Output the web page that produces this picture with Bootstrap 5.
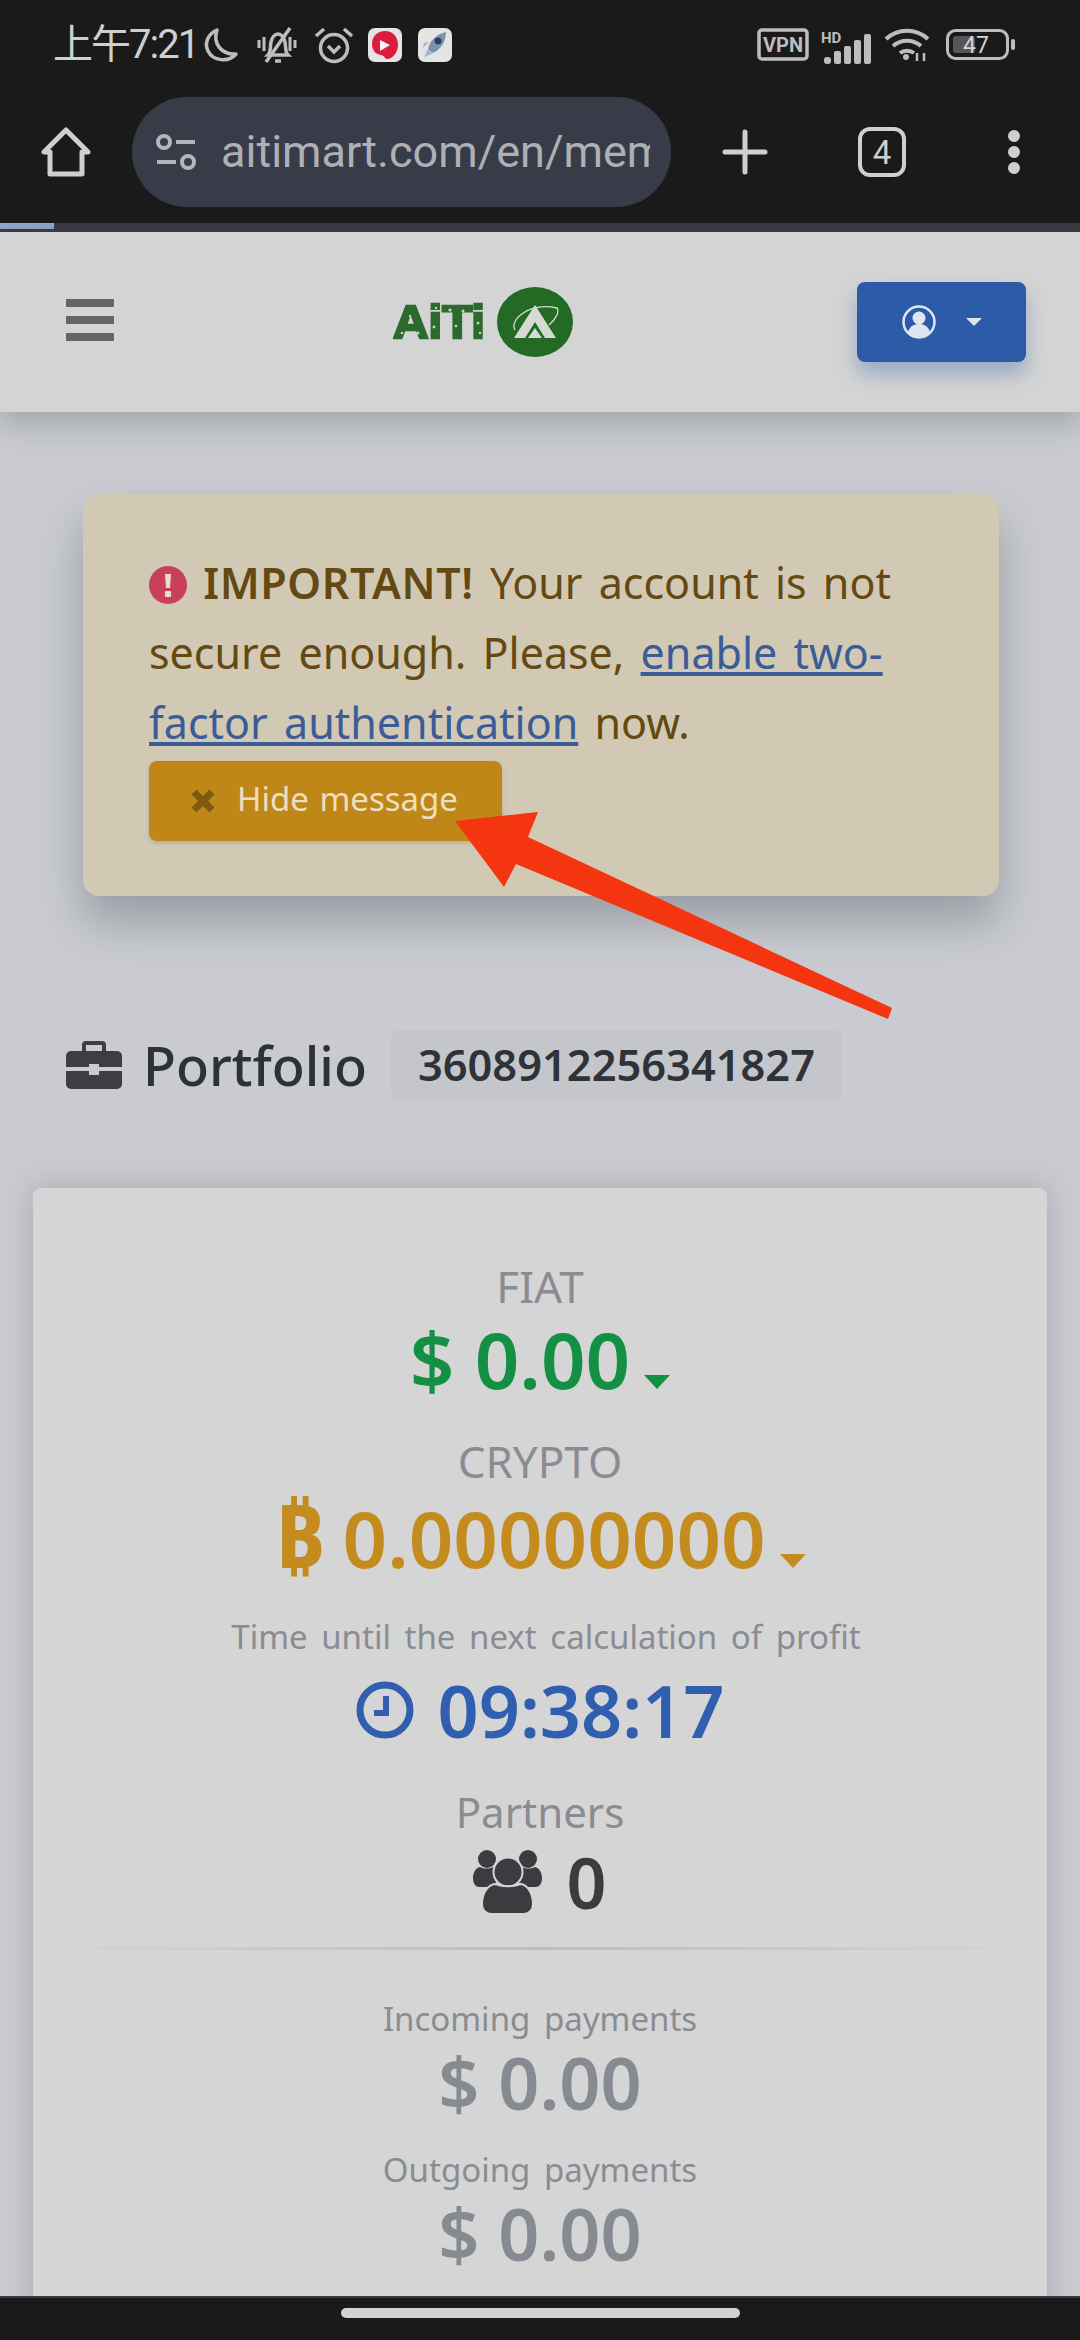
<!DOCTYPE html>
<html lang="en">
<head>
    <meta charset="UTF-8">
    <title>AiTi - Portfolio</title>
    <meta name="viewport" content="width=device-width, initial-scale=1">
    <link href="https://cdn.jsdelivr.net/npm/bootstrap@5.3.3/dist/css/bootstrap.min.css" rel="stylesheet">
    <style>
        html, body { height: 2340px; overflow: hidden; }
        body { background: #c9cbd1; font-family: "Noto Sans", sans-serif; color: #33363a; }
        .phone { height: 2340px; position: relative; }

        /* browser chrome */
        .chrome-top { background: #1a1a1a; color: #cfcfcf; }
        .status-row { height: 97px; padding: 0 65px 8px 53px; }
        .clock-txt { font-family: "Roboto", "Noto Sans CJK SC", sans-serif; font-size: 40px; line-height: 1; letter-spacing: -2px; width: 150px; white-space: nowrap; }
        .app-chip { width: 34px; height: 34px; border-radius: 7px; background: #e4e4e4; }
        .tool-row { height: 126px; padding: 0 0 16px 41px; }
        .url-pill { width: 539px; height: 110px; margin-left: 41px; border-radius: 55px; background: #383c48; padding-left: 23px; overflow: hidden; }
        .url-txt { font-family: "Roboto", sans-serif; font-size: 45px; color: #aeb0b6; margin-left: 24px; white-space: nowrap; width: 429px; overflow: hidden; }
        .plus-ico { margin-left: 51px; }
        .tab-count { margin-left: 90px; width: 48px; height: 50px; border: 4px solid #cfcfcf; border-radius: 12px; font-family: "Roboto", sans-serif; font-size: 33px; line-height: 1; }
        .dots-ico { margin-left: 101px; }
        .load-track { height: 9px; background: #3a3a42; }
        .load-fill { width: 54px; height: 6px; background: #8fa6cf; }

        /* site header */
        .site-nav { height: 180px; background: #d4d4d4; padding: 0 54px 0 66px; box-shadow: 0 10px 30px rgba(60, 62, 70, .3); position: relative; }
        .burger-bar { width: 48px; height: 8px; background: #666; border-radius: 1px; }
        .burger-stack { gap: 9px; margin-bottom: 4px; }
        .site-logo { margin-left: 279px; }
        .logo-word { font-family: "Liberation Sans", sans-serif; font-weight: 700; font-size: 47px; fill: #2d6a2d; stroke: #2d6a2d; stroke-width: 2.5px; }
        .user-btn { width: 169px; height: 80px; background: #2c5ba8; border: 0; border-radius: 8px; box-shadow: 0 12px 20px rgba(44, 91, 168, .35); color: #dfe6f2; gap: 30px; font-size: 28px; }
        .user-btn.dropdown-toggle::after { margin-left: 0; vertical-align: 0; }

        /* notice */
        .notice { margin: 82px 81px 0 83px; padding: 54px 66px 55px; background: #d2c9b5; border: 0; border-radius: 16px; color: #644a12; font-size: 43px; word-spacing: 5px; line-height: 70px; box-shadow: 0 26px 44px rgba(60, 62, 70, .32); }
        .notice strong { letter-spacing: .6px; }
        .notice a { color: #3b5c95; }
        .notice-ico { width: 38px; height: 38px; vertical-align: -5px; }
        .notice-btn { display: flex; align-items: center; width: 353px; height: 80px; margin-top: 3px; padding: 0 0 4px 42px; background: #bf8718; border: 0; border-radius: 8px; color: #ecdfc0; font-size: 33px; word-spacing: 2px; box-shadow: 0 2px 4px rgba(70, 60, 30, .2); }
        .notice-x { margin: 4px 22px 0 0; }

        /* portfolio title */
        .pf-head { margin: 134px 0 0 66px; height: 70px; }
        .pf-title { font-size: 54px; font-weight: 500; color: #2e3136; margin: 0 24px 0 21px; line-height: 70px; }
        .pf-id { background: #c5c6cc; color: #2f3237; font-size: 43.4px; font-weight: 600; line-height: 70px; height: 70px; padding: 0 27px; border-radius: 5px; }

        /* summary card */
        .sum-card { margin: 88px 33px 0; height: 1200px; background: #d5d5d5; border: 0; border-radius: 8px; box-shadow: 0 0 30px rgba(70, 72, 80, .25); padding-top: 68px; text-align: center; }
        .lbl { color: #8a8c92; font-size: 44px; line-height: 60px; }
        .lbl-partners { font-size: 42px; margin-top: 30px; }
        .lbl-crypto { margin-top: 29px; }
        .lbl-sm { color: #8a8c92; font-size: 33px; word-spacing: 5px; line-height: 54px; }
        .lbl-time { margin-top: 29px; padding-left: 12px; }
        .lbl-out { margin-top: 25px; }
        .amt { font-size: 78px; font-weight: 600; line-height: 86px; }
        .amt-green { color: #149044; }
        .amt-gold { color: #c48c1e; }
        .btc-sign { font-size: 1.12em; font-weight: 700; line-height: 1; margin-right: -2px; }
        .amt-blue { color: #2f5fae; font-size: 72px; line-height: 84px; margin-top: 4px; }
        .amt-dark { color: #3b3c40; font-size: 70px; line-height: 84px; margin-top: -2px; }
        .amt-grey { color: #868b92; font-size: 72px; line-height: 72px; }
        .amt-caret { display: inline-block; border-left: 13px solid transparent; border-right: 13px solid transparent; border-top: 14px solid currentColor; margin-left: 14px; vertical-align: 0; }
        .sum-rule { height: 3px; margin: 23px 56px 42px; border: 0; opacity: 1; background: linear-gradient(90deg, transparent, #bdbdbd 50%, transparent); }

        /* bottom bar */
        .chrome-bottom { position: absolute; left: 0; right: 0; bottom: 0; height: 44px; background: #1a1a1a; border-top: 2px solid #3a3a42; }
        .home-pill { width: 399px; height: 10px; border-radius: 5px; background: #d2d2d2; margin-top: 10px; }

        .red-arrow { position: absolute; left: 0; top: 0; pointer-events: none; }
    </style>
</head>
<body>
<div class="phone d-flex flex-column">

    <!-- barra do navegador -->
    <div class="chrome-top flex-shrink-0">
        <div class="status-row d-flex align-items-center">
            <span class="clock-txt">上午7:21</span>
            <svg width="36" height="36" viewBox="0 0 36 36" fill="none" stroke="#bdbdbd" stroke-width="3.5" stroke-linejoin="round"><path d="M14 3C5 7 1 16 5 24c5 10 20 12 28 3C20 28 9 18 14 3z"/></svg>
            <svg class="ms-3" width="44" height="38" viewBox="0 0 44 38" fill="none" stroke="#bdbdbd" stroke-width="3.5"><path d="M13 29c3-3 2-8 3-13 1-5 4-8 7-8s6 3 7 8c1 5 0 10 3 13zM20 35h6"/><path d="M4 14v8M9 11v14M35 11v14M40 14v8" stroke-width="3"/><path d="M35 2 11 36"/></svg>
            <svg style="margin-left:15px" width="40" height="38" viewBox="0 0 40 38" fill="none" stroke="#bdbdbd" stroke-width="3.5"><circle cx="20" cy="22" r="13.5"/><path d="M14 20l6 6 6-6M2 10l8-7M38 10l-8-7"/></svg>
            <span class="app-chip d-flex align-items-center justify-content-center" style="margin-left:14px">
                <svg width="28" height="30" viewBox="0 0 28 30"><path d="M14 1c8 0 13 6 13 14s-6 14-11 14c-2 0-2-3-6-4C4 24 1 20 1 14 1 6 7 1 14 1z" fill="#dc1c3c"/><path d="M9 10l10 5-10 6z" fill="#f4f4f4"/></svg>
            </span>
            <span class="app-chip ms-3 d-flex align-items-center justify-content-center">
                <svg width="28" height="30" viewBox="0 0 28 30"><path d="M25 2C16 4 9 10 7 19l4 4c8-2 14-11 14-21z" fill="#7d92b0"/><circle cx="17" cy="11" r="3.5" fill="#2f3e58"/><path d="M7 19l-4 8 8-3zM8 12l-5 1-1 5z" fill="#aab6c6"/></svg>
            </span>
            <span class="ms-auto d-flex align-items-center">
                <svg width="52" height="33" viewBox="0 0 52 33"><rect x="2" y="2" width="48" height="29" rx="3" fill="none" stroke="#bdbdbd" stroke-width="3.5"/><text x="26" y="23.5" text-anchor="middle" font-family="Roboto, sans-serif" font-size="20" font-weight="700" fill="#bdbdbd">VPN</text></svg>
                <svg style="margin-left:12px" width="50" height="38" viewBox="0 -5 50 38" fill="#bdbdbd"><text x="0" y="12" font-family="Roboto, sans-serif" font-size="15" font-weight="700">HD</text><rect x="3" y="26" width="7" height="7" rx="3"/><rect x="13" y="20" width="7" height="13" rx="2"/><rect x="23" y="15" width="7" height="18" rx="2"/><rect x="33" y="9" width="7" height="24" rx="2"/><rect x="43" y="3" width="7" height="30" rx="2"/></svg>
                <svg style="margin-left:13px" width="47" height="33" viewBox="0 0 47 33" fill="none" stroke="#bdbdbd" stroke-width="4"><path d="M2 11c12-11 30-11 42 0M9 18c8-7 20-7 28 0M16 25c4-3 10-3 14 0"/><circle cx="22" cy="29" r="3" fill="#bdbdbd" stroke="none"/><path d="M33 33v-8M40 33v-8" stroke-width="2.5"/></svg>
                <svg style="margin-left:15px" width="69" height="31" viewBox="0 0 69 31"><rect x="1.5" y="1.5" width="60" height="28" rx="8" fill="none" stroke="#bdbdbd" stroke-width="3"/><rect x="7" y="7" width="22" height="17" rx="3" fill="#55565a"/><rect x="65" y="10" width="4" height="11" rx="2" fill="#bdbdbd"/><text x="30" y="24" text-anchor="middle" font-family="Roboto, sans-serif" font-size="23" fill="#d4d4d4">47</text></svg>
            </span>
        </div>
        <div class="tool-row d-flex align-items-center">
            <svg width="50" height="52" viewBox="0 0 50 52" fill="none" stroke="#cfcfcf" stroke-width="5" stroke-linejoin="round"><path d="M25 4 3 26h6v22h32V26h6z"/></svg>
            <div class="url-pill d-flex align-items-center">
                <svg width="42" height="38" viewBox="0 0 42 38" fill="none" stroke="#b4b5ba" stroke-width="4"><circle cx="9" cy="9" r="6"/><path d="M21 9h19M2 29h19"/><circle cx="33" cy="29" r="6"/></svg>
                <span class="url-txt">aitimart.com/en/mem</span>
            </div>
            <svg class="plus-ico" width="46" height="46" viewBox="0 0 46 46" stroke="#cfcfcf" stroke-width="5" stroke-linecap="round"><path d="M23 3v40M3 23h40"/></svg>
            <span class="tab-count d-flex align-items-center justify-content-center">4</span>
            <svg class="dots-ico" width="14" height="46" viewBox="0 0 14 46" fill="#cfcfcf"><circle cx="7" cy="7" r="6"/><circle cx="7" cy="23" r="6"/><circle cx="7" cy="39" r="6"/></svg>
        </div>
        <div class="load-track"><div class="load-fill"></div></div>
    </div>

    <!-- navbar do site -->
    <nav class="site-nav flex-shrink-0 d-flex align-items-center">
        <div class="burger-stack d-flex flex-column">
            <span class="burger-bar"></span>
            <span class="burger-bar"></span>
            <span class="burger-bar"></span>
        </div>
        <svg class="site-logo" width="184" height="78" viewBox="0 0 184 78">
            <text class="logo-word" x="0" y="55" textLength="92" lengthAdjust="spacingAndGlyphs">AiTi</text>
            <g fill="#c4d6b8"><circle cx="9" cy="50" r="1.3"/><circle cx="17" cy="33" r="1.2"/><circle cx="25" cy="50" r="1.5"/><circle cx="43" cy="25" r="1.2"/><circle cx="41" cy="44" r="1.4"/><circle cx="57" cy="27" r="1.6"/><circle cx="63" cy="43" r="1.3"/><circle cx="70" cy="28" r="1.5"/><circle cx="85" cy="40" r="1.5"/><circle cx="87" cy="50" r="1.2"/></g>
            <ellipse cx="142" cy="39" rx="38" ry="35" fill="#236b25"/>
            <path d="M142 22l21 33h-11l-10-16-10 16h-11z" fill="#d7dad2"/>
            <path d="M135 55l7-10 7 10z" fill="#d7dad2"/>
            <path d="M122 47c-6-10 14-28 42-22 3 4-2 12-8 17" fill="none" stroke="#d7dad2" stroke-width="1.3"/>
        </svg>
        <button type="button" class="btn user-btn dropdown-toggle ms-auto d-flex align-items-center justify-content-center">
            <svg width="34" height="34" viewBox="0 0 34 34"><circle cx="17" cy="17" r="15.5" fill="none" stroke="#dfe6f2" stroke-width="2.5"/><circle cx="17" cy="13" r="6.5" fill="#dfe6f2"/><path d="M6 27c2-6 6-8 11-8s9 2 11 8c-6 6-16 6-22 0z" fill="#dfe6f2"/></svg>
        </button>
    </nav>

    <main class="flex-grow-1 overflow-hidden">
        <div class="alert notice" role="alert">
            <svg class="notice-ico" viewBox="0 0 38 38"><circle cx="19" cy="19" r="19" fill="#c8415a"/><path d="M16 8h6l-1 14h-4z" fill="#e6dcd0"/><rect x="16" y="25" width="6" height="6" rx="1" fill="#e6dcd0"/></svg>
            <strong class="fw-semibold">IMPORTANT!</strong> Your account is not secure enough. Please, <a href="#">enable two-factor authentication</a> now.
            <button type="button" class="btn notice-btn">
                <svg class="notice-x" width="24" height="24" viewBox="0 0 24 24" stroke="#7d5a10" stroke-width="7"><path d="M3 3l18 18M21 3 3 21"/></svg>
                Hide message
            </button>
        </div>

        <div class="pf-head d-flex align-items-center">
            <svg width="56" height="48" viewBox="0 0 56 48" fill="#3c3e42"><path d="M20 0h16a4 4 0 0 1 4 4v6h11a5 5 0 0 1 5 5v11H33v-3H23v3H0V15a5 5 0 0 1 5-5h11V4a4 4 0 0 1 4-4zm0 4v6h16V4z" fill-rule="evenodd"/><path d="M0 30h23v4h10v-4h23v13a5 5 0 0 1-5 5H5a5 5 0 0 1-5-5z"/></svg>
            <h2 class="pf-title">Portfolio</h2>
            <span class="pf-id">3608912256341827</span>
        </div>

        <div class="card sum-card">
            <div class="lbl">FIAT</div>
            <div class="amt amt-green">$ 0.00<span class="amt-caret"></span></div>
            <div class="lbl lbl-crypto">CRYPTO</div>
            <div class="amt amt-gold"><span class="btc-sign">₿</span> 0.00000000<span class="amt-caret"></span></div>
            <div class="lbl-sm lbl-time">Time until the next calculation of profit</div>
            <div class="amt amt-blue d-flex align-items-center justify-content-center">
                <svg width="58" height="58" viewBox="0 0 58 58" class="me-4" fill="none" stroke="#2f5fae" stroke-width="7"><circle cx="29" cy="29" r="25"/><path d="M30 15v17H18" stroke-width="6"/></svg>
                09:38:17
            </div>
            <div class="lbl lbl-partners">Partners</div>
            <div class="amt amt-dark d-flex align-items-center justify-content-center">
                <svg width="69" height="64" viewBox="0 0 69 64" class="me-4" fill="#3b3c40" stroke="#d5d5d5" stroke-width="2">
                    <circle cx="14" cy="9" r="9" stroke="none"/><circle cx="55" cy="9" r="9" stroke="none"/>
                    <path d="M0 28c0-6 3-10 7-11 4 2 9 2 13 0l8 8-8 12H6c-3 0-6-3-6-9zM69 28c0-6-3-10-7-11-4 2-9 2-13 0l-8 8 8 12h14c3 0 6-3 6-9z" stroke="none"/>
                    <circle cx="35" cy="22" r="14.5"/>
                    <path d="M9 54c0-12 7-20 14-20 4 3 20 3 24 0 6 0 13 8 13 20 0 6-4 10-9 10H18c-5 0-9-4-9-10z"/>
                </svg>
                0
            </div>
            <hr class="sum-rule">
            <div class="lbl-sm">Incoming payments</div>
            <div class="amt amt-grey">$ 0.00</div>
            <div class="lbl-sm lbl-out">Outgoing payments</div>
            <div class="amt amt-grey">$ 0.00</div>
        </div>
    </main>

    <div class="chrome-bottom d-flex justify-content-center">
        <div class="home-pill"></div>
    </div>

    <!-- seta vermelha por cima do botão -->
    <svg class="red-arrow" width="1080" height="2340" viewBox="0 0 1080 2340"><polygon points="455,821 538,812 528,837 892,1008 888,1019 516,864 504,887" fill="#f5350f"/></svg>
</div>
<script src="https://cdn.jsdelivr.net/npm/bootstrap@5.3.3/dist/js/bootstrap.bundle.min.js"></script>
</body>
</html>
